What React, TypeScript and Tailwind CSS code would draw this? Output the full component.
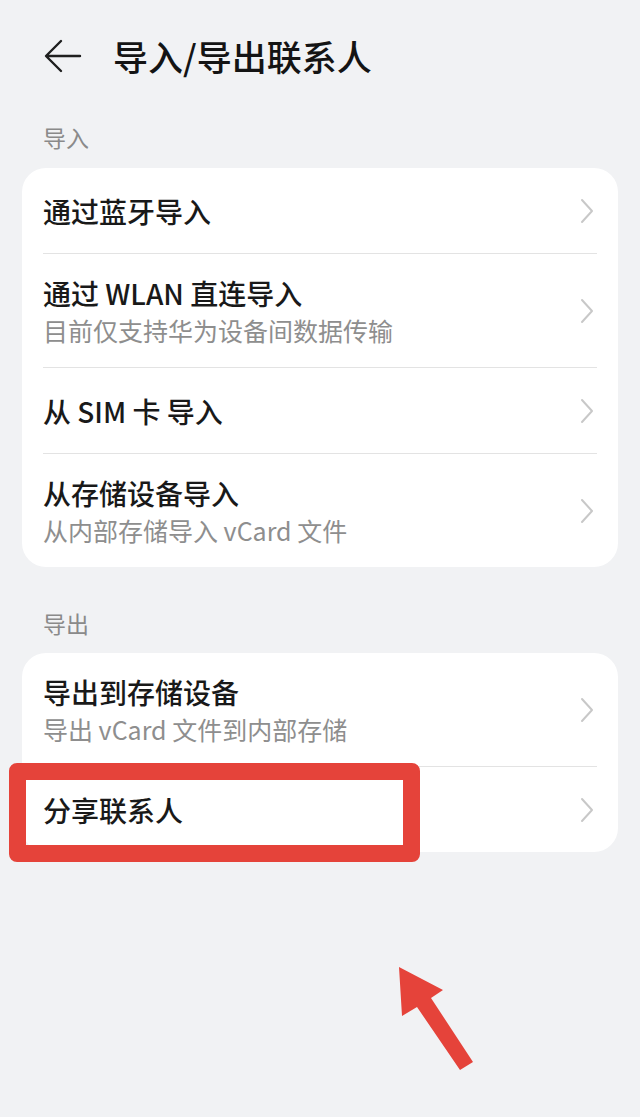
type Row = { title: string; sub?: string }

const importRows: Row[] = [
  { title: '通过蓝牙导入' },
  { title: '通过 WLAN 直连导入', sub: '目前仅支持华为设备间数据传输' },
  { title: '从 SIM 卡 导入' },
  { title: '从存储设备导入', sub: '从内部存储导入 vCard 文件' },
]

const exportRows: Row[] = [
  { title: '导出到存储设备', sub: '导出 vCard 文件到内部存储' },
  { title: '分享联系人' },
]

function Chevron() {
  return (
    <svg width="16" height="26" viewBox="0 0 16 26" className="shrink-0">
      <path d="M3 2 L13 13 L3 24" fill="none" stroke="#c8c8c8" strokeWidth="2" strokeLinecap="round" strokeLinejoin="round" />
    </svg>
  )
}

function ListRow({ row, last }: { row: Row; last: boolean }) {
  return (
    <div className="relative">
      <div
        className={`flex items-center justify-between pl-[21px] pr-[23px] ${
          row.sub ? 'h-[113px]' : 'h-[85px]'
        }`}
      >
        <div className="flex flex-col">
          <span className="text-[28px] leading-[36px] font-medium text-[#191919]">{row.title}</span>
          {row.sub && (
            <span className="mt-[3px] text-[25px] leading-[32px] text-[#8e8e8e]">{row.sub}</span>
          )}
        </div>
        <Chevron />
      </div>
      {!last && <div className="mx-[21px] h-px bg-[#e3e3e3]" />}
    </div>
  )
}

function Card({ rows }: { rows: Row[] }) {
  return (
    <div className="mx-[22px] rounded-[24px] bg-white">
      {rows.map((r, i) => (
        <ListRow key={r.title} row={r} last={i === rows.length - 1} />
      ))}
    </div>
  )
}

export default function App() {
  return (
    <div
      className="relative h-[1117px] w-full overflow-hidden bg-[#f1f2f4]"
      style={{ fontFamily: '"Noto Sans CJK SC", "Noto Sans", sans-serif' }}
    >
      {/* header */}
      <div className="flex h-[112px] items-center pl-[44px]">
        <svg width="38" height="34" viewBox="0 0 38 34" className="shrink-0">
          <path d="M36 17 H3 M17 2 L2 17 L17 32" fill="none" stroke="#1f1f1f" strokeWidth="2.4" strokeLinecap="round" strokeLinejoin="round" />
        </svg>
        <h1 className="ml-[31px] text-[35px] leading-[44px] font-medium text-[#141414]">导入/导出联系人</h1>
      </div>

      <div className="pl-[43px] pt-[13px] pb-[19px] text-[23px] leading-[24px] text-[#8a8a8a]">导入</div>
      <Card rows={importRows} />

      <div className="pl-[43px] pt-[44px] pb-[18px] text-[23px] leading-[24px] text-[#8a8a8a]">导出</div>
      <Card rows={exportRows} />

      {/* highlight box */}
      <div className="absolute left-[9px] top-[763px] h-[99px] w-[411px] rounded-[8px] border-[17px] border-[#e5433a]" />

      {/* arrow */}
      <svg className="absolute left-0 top-0" width="640" height="1117" viewBox="0 0 640 1117">
        <polygon
          points="399,967 443,990 431,998 473,1062 460,1070 417,1007 402,1016"
          fill="#e5433a"
        />
      </svg>
    </div>
  )
}
